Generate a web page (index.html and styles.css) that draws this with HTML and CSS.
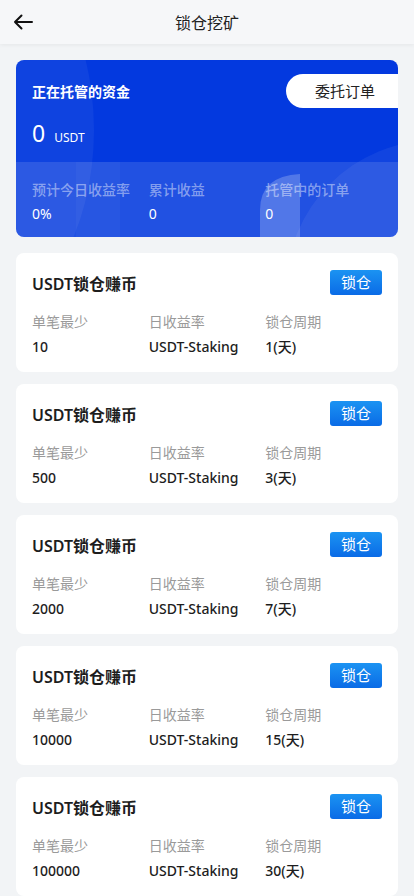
FILE: index.html
```html
<!DOCTYPE html>
<html lang="zh">
<head>
    <meta charset="UTF-8">
    <meta name="viewport" content="width=device-width, initial-scale=1.0">
    <title>锁仓挖矿</title>
    <link rel="stylesheet" href="styles.css">
</head>
<body>
    <div class="header">
        <svg class="back" width="20" height="16" viewBox="0 0 20 16">
            <path d="M19 8H2M8.5 1.5L2 8l6.5 6.5" fill="none" stroke="#111" stroke-width="2" stroke-linecap="round" stroke-linejoin="round"/>
        </svg>
        <div class="header-title">锁仓挖矿</div>
    </div>

    <div class="page">
        <div class="fund-card">
            <svg class="fund-bg" viewBox="0 0 382 177" preserveAspectRatio="none">
                <rect width="382" height="177" fill="#0339df"/>
                <ellipse cx="-40" cy="70" rx="118" ry="190" fill="#ffffff" fill-opacity="0.05"/>
                <circle cx="420" cy="230" r="150" fill="#ffffff" fill-opacity="0.06"/>
                <rect y="102" width="382" height="75" fill="#ffffff" fill-opacity="0.12"/>
                <rect x="60" y="102" width="44" height="75" fill="#ffffff" fill-opacity="0.03"/>
                <path d="M244 177V150q0-34 40-36V177z" fill="#ffffff" fill-opacity="0.22"/>
            </svg>
            <div class="fund-top">
                <div class="fund-title">正在托管的资金</div>
                <div class="order-btn">委托订单</div>
            </div>
            <div class="fund-amount"><span class="num">0</span><span class="unit">USDT</span></div>
            <div class="fund-stats">
                <div class="stat">
                    <div class="stat-label">预计今日收益率</div>
                    <div class="stat-value">0%</div>
                </div>
                <div class="stat">
                    <div class="stat-label">累计收益</div>
                    <div class="stat-value">0</div>
                </div>
                <div class="stat">
                    <div class="stat-label">托管中的订单</div>
                    <div class="stat-value">0</div>
                </div>
            </div>
        </div>

        <div class="plan">
            <div class="plan-head">
                <div class="plan-title">USDT锁仓赚币</div>
                <div class="lock-btn">锁仓</div>
            </div>
            <div class="plan-row">
                <div class="col"><div class="label">单笔最少</div><div class="value">10</div></div>
                <div class="col"><div class="label">日收益率</div><div class="value">USDT-Staking</div></div>
                <div class="col"><div class="label">锁仓周期</div><div class="value">1(天)</div></div>
            </div>
        </div>

        <div class="plan">
            <div class="plan-head">
                <div class="plan-title">USDT锁仓赚币</div>
                <div class="lock-btn">锁仓</div>
            </div>
            <div class="plan-row">
                <div class="col"><div class="label">单笔最少</div><div class="value">500</div></div>
                <div class="col"><div class="label">日收益率</div><div class="value">USDT-Staking</div></div>
                <div class="col"><div class="label">锁仓周期</div><div class="value">3(天)</div></div>
            </div>
        </div>

        <div class="plan">
            <div class="plan-head">
                <div class="plan-title">USDT锁仓赚币</div>
                <div class="lock-btn">锁仓</div>
            </div>
            <div class="plan-row">
                <div class="col"><div class="label">单笔最少</div><div class="value">2000</div></div>
                <div class="col"><div class="label">日收益率</div><div class="value">USDT-Staking</div></div>
                <div class="col"><div class="label">锁仓周期</div><div class="value">7(天)</div></div>
            </div>
        </div>

        <div class="plan">
            <div class="plan-head">
                <div class="plan-title">USDT锁仓赚币</div>
                <div class="lock-btn">锁仓</div>
            </div>
            <div class="plan-row">
                <div class="col"><div class="label">单笔最少</div><div class="value">10000</div></div>
                <div class="col"><div class="label">日收益率</div><div class="value">USDT-Staking</div></div>
                <div class="col"><div class="label">锁仓周期</div><div class="value">15(天)</div></div>
            </div>
        </div>

        <div class="plan">
            <div class="plan-head">
                <div class="plan-title">USDT锁仓赚币</div>
                <div class="lock-btn">锁仓</div>
            </div>
            <div class="plan-row">
                <div class="col"><div class="label">单笔最少</div><div class="value">100000</div></div>
                <div class="col"><div class="label">日收益率</div><div class="value">USDT-Staking</div></div>
                <div class="col"><div class="label">锁仓周期</div><div class="value">30(天)</div></div>
            </div>
        </div>
    </div>
</body>
</html>
```

FILE: styles.css
```css
body {
    margin: 0;
    background-color: #f2f4f6;
    font-family: "Noto Sans", "Noto Sans CJK SC", sans-serif;
    color: #222;
}
.header {
    position: relative;
    height: 44px;
    background-color: #f6f7f9;
    box-shadow: 0 1px 4px rgba(0, 0, 0, 0.06);
    display: flex;
    align-items: center;
    justify-content: center;
}
.back {
    position: absolute;
    left: 13px;
    top: 14px;
}
.header-title {
    font-size: 16px;
    color: #222;
}
.page {
    padding: 16px 16px 0;
    display: flex;
    flex-direction: column;
    gap: 12px;
}
.fund-card {
    position: relative;
    height: 177px;
    border-radius: 8px;
    overflow: hidden;
    color: white;
    display: flex;
    flex-direction: column;
    margin-bottom: 4px;
}
.fund-bg {
    position: absolute;
    top: 0;
    left: 0;
    width: 100%;
    height: 100%;
    z-index: 0;
}
.fund-top, .fund-amount, .fund-stats {
    position: relative;
    z-index: 1;
}
.fund-top {
    display: flex;
    justify-content: space-between;
    align-items: center;
    padding-top: 14px;
    padding-left: 16px;
    height: 34px;
}
.fund-title {
    font-size: 14px;
    font-weight: bold;
}
.order-btn {
    width: 112px;
    height: 34px;
    line-height: 34px;
    background-color: white;
    border-radius: 17px 0 0 17px;
    color: #222;
    font-size: 15px;
    text-align: center;
    box-sizing: border-box;
    padding-left: 6px;
}
.fund-amount {
    padding-left: 16px;
    margin-top: 9px;
    display: flex;
    align-items: baseline;
    height: 30px;
}
.fund-amount .num {
    font-size: 23px;
    margin-right: 9px;
}
.fund-amount .unit {
    font-size: 12px;
}
.fund-stats {
    margin-top: 17px;
    padding: 16px 16px 0;
    display: flex;
}
.stat {
    width: 117px;
}
.stat-label {
    font-size: 14px;
    line-height: 20px;
    color: rgba(255, 255, 255, 0.45);
    font-weight: 500;
}
.stat-value {
    font-size: 14px;
    line-height: 20px;
    margin-top: 4px;
}
.plan {
    background-color: white;
    border-radius: 8px;
    height: 119px;
    box-sizing: border-box;
    padding: 16px 16px 0;
}
.plan-head {
    display: flex;
    justify-content: space-between;
    align-items: center;
    height: 26px;
}
.plan-title {
    font-size: 16px;
    font-weight: 600;
    color: #1d1d1d;
    margin-top: 2px;
}
.lock-btn {
    width: 52px;
    height: 25px;
    line-height: 25px;
    text-align: center;
    color: white;
    font-size: 15px;
    border-radius: 3px;
    background: linear-gradient(180deg, #1b93f2, #0a6be6);
}
.plan-row {
    display: flex;
    margin-top: 17px;
}
.col {
    width: 117px;
}
.label {
    font-size: 14px;
    line-height: 20px;
    color: #9a9a9a;
}
.value {
    font-size: 14px;
    line-height: 20px;
    margin-top: 5px;
    color: #1d1d1d;
    font-weight: 500;
}
```
